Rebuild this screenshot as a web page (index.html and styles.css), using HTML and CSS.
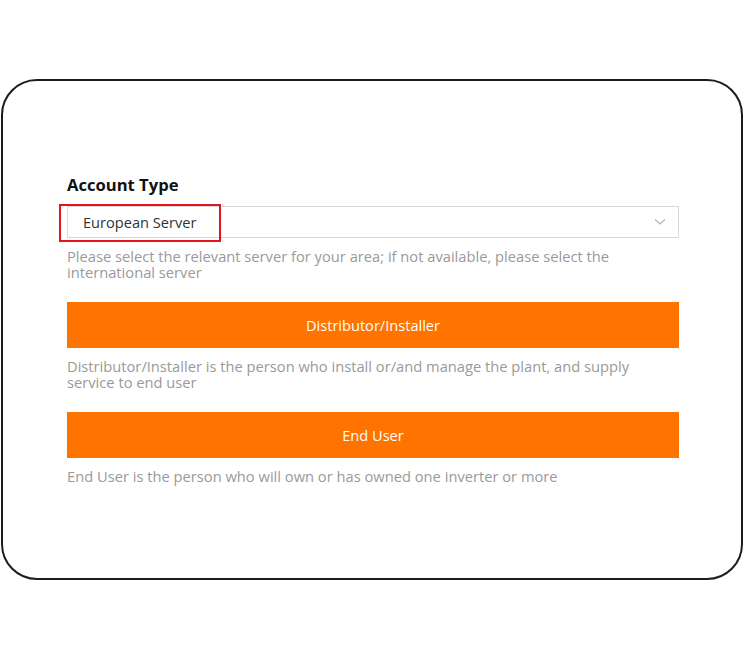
FILE: index.html
```html
<!DOCTYPE html>
<html>
<head>
<meta charset="utf-8">
<link rel="stylesheet" href="styles.css">
</head>
<body>
<div class="frame">
  <div class="form">
    <div class="label">Account Type</div>
    <div class="select-wrap">
      <div class="select">
        <span class="select-value">European Server</span>
        <svg class="chevron" width="12" height="8" viewBox="0 0 12 8"><path d="M1 1.5 L6 6 L11 1.5" fill="none" stroke="#b5b5b5" stroke-width="1.2"/></svg>
      </div>
      <div class="highlight"></div>
    </div>
    <p class="hint">Please select the relevant server for your area; if not available, please select the international server</p>
    <button class="btn">Distributor/Installer</button>
    <p class="hint">Distributor/Installer is the person who install or/and manage the plant, and supply service to end user</p>
    <button class="btn">End User</button>
    <p class="hint">End User is the person who will own or has owned one inverter or more</p>
  </div>
</div>
</body>
</html>
```
FILE: styles.css
```css
html, body {
  margin: 0;
  padding: 0;
  background: #ffffff;
}
body {
  font-family: "Open Sans", "Noto Sans", sans-serif;
}
.frame {
  box-sizing: border-box;
  margin: 79px 0 0 1px;
  width: 742px;
  height: 501px;
  border: 2px solid #1c1c1c;
  border-radius: 36px;
  padding: 94px 62px 0 64px;
}
.form {
  display: flex;
  flex-direction: column;
}
.label {
  font-size: 16.6px;
  font-weight: 700;
  color: #111;
  line-height: 20px;
  margin-bottom: 11px;
}
.select-wrap {
  position: relative;
}
.select {
  box-sizing: border-box;
  height: 32px;
  border: 1px solid #d9d9d9;
  display: flex;
  align-items: center;
  justify-content: space-between;
  padding: 0 12px 0 15px;
}
.select-value {
  font-size: 14.6px;
  color: #333;
}
.highlight {
  position: absolute;
  left: -8px;
  top: -2px;
  width: 162px;
  height: 38px;
  box-sizing: border-box;
  border: 2px solid #e3141b;
}
.hint {
  margin: 10px 0 22px;
  font-size: 14.7px;
  line-height: 16px;
  color: #9a9a9a;
}
.btn {
  display: block;
  width: 100%;
  height: 46px;
  border: none;
  background: #ff7300;
  color: #fff;
  font-family: inherit;
  font-size: 14.6px;
  padding: 0;
}
```
